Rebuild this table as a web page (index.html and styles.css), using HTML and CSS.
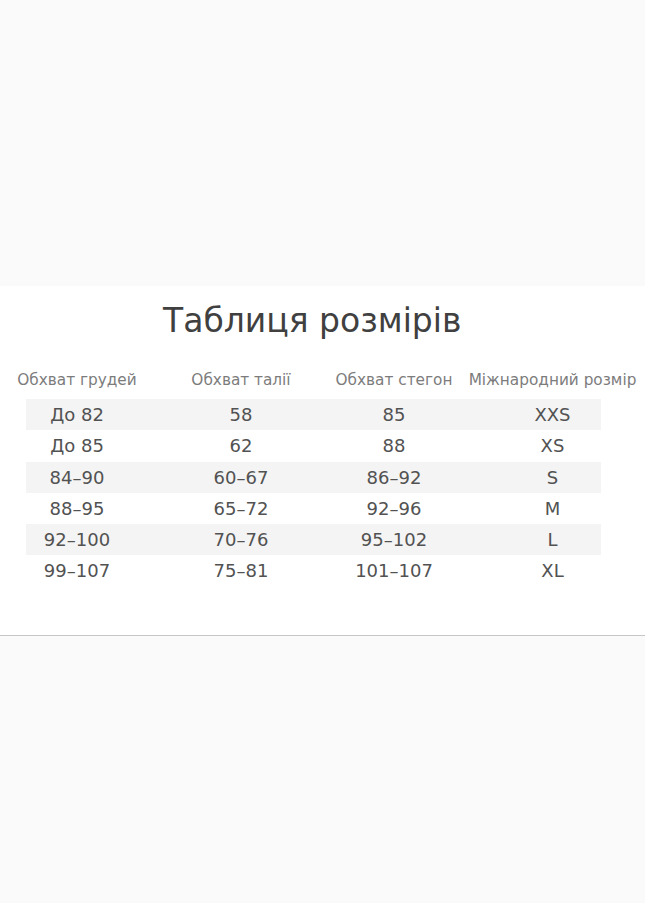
FILE: index.html
```html
<!DOCTYPE html>
<html lang="uk">
<head>
<meta charset="utf-8">
<title>Таблиця розмірів</title>
<link rel="stylesheet" href="styles.css">
</head>
<body>
<div class="top"></div>
<section class="card">
  <h1 class="title">Таблиця розмірів</h1>
  <div class="table">
    <div class="row head">
      <div>Обхват грудей</div><div>Обхват талії</div><div>Обхват стегон</div><div>Міжнародний розмір</div>
    </div>
    <div class="row odd"><div>До 82</div><div>58</div><div>85</div><div>XXS</div></div>
    <div class="row"><div>До 85</div><div>62</div><div>88</div><div>XS</div></div>
    <div class="row odd"><div>84–90</div><div>60–67</div><div>86–92</div><div>S</div></div>
    <div class="row"><div>88–95</div><div>65–72</div><div>92–96</div><div>M</div></div>
    <div class="row odd"><div>92–100</div><div>70–76</div><div>95–102</div><div>L</div></div>
    <div class="row"><div>99–107</div><div>75–81</div><div>101–107</div><div>XL</div></div>
  </div>
</section>
<div class="bottom"></div>
</body>
</html>
```
FILE: styles.css
```css
html, body {
  margin: 0;
  padding: 0;
}
body {
  background: #fafafa;
  font-family: "DejaVu Sans", "Liberation Sans", sans-serif;
  width: 645px;
  height: 903px;
  overflow: hidden;
}
.top {
  height: 286px;
}
.card {
  background: #ffffff;
  padding: 16px 0 48px;
  border-bottom: 1px solid #c6c6c6;
  height: 285px;
}
.title {
  margin: 0;
  font-weight: normal;
  font-size: 33px;
  line-height: 38px;
  color: #404040;
  text-align: left;
  padding-left: 163px;
}
.table {
  margin-top: 30px;
}
.row {
  display: grid;
  grid-template-columns: 154px 174px 132px 185px;
  text-align: center;
  height: 31.2px;
  line-height: 31.2px;
  font-size: 18px;
  color: #525252;
}
.row.head {
  height: 20px;
  line-height: 20px;
  font-size: 15.3px;
  color: #7c7c7c;
  margin-bottom: 9.3px;
  white-space: nowrap;
}
.row.odd {
  background: linear-gradient(#f4f4f4, #f4f4f4) 26px 0 / 575px 100% no-repeat;
}
```
